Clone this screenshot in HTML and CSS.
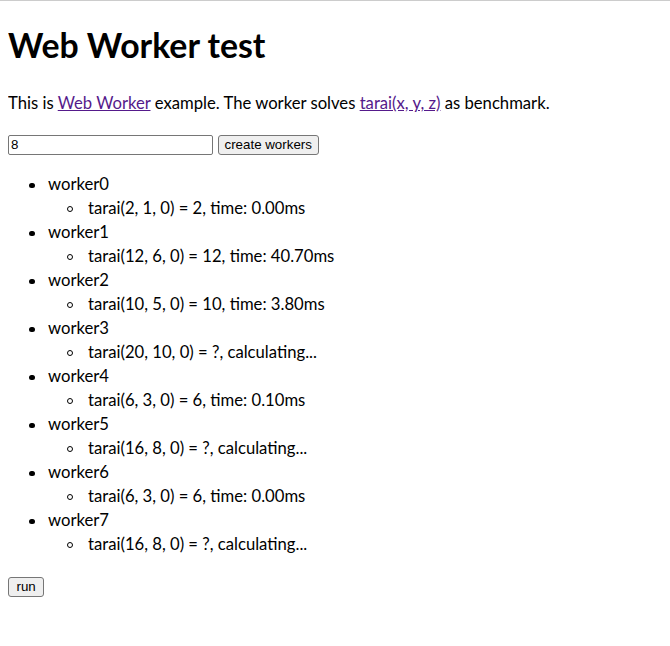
FILE: index.html
```html
<!DOCTYPE html>
<html>
<head>
<meta charset="utf-8">
<title>Web Worker test</title>
<link rel="stylesheet" href="styles.css">
</head>
<body>
<h1 class="title">Web Worker test</h1>
<p class="intro">This is <a class="link" href="#">Web Worker</a> example. The worker solves <a class="link" href="#">tarai(x, y, z)</a> as benchmark.</p>
<div class="controls">
  <input class="count" type="text" value="8">
  <button class="btn" type="button">create workers</button>
</div>
<ul class="workers">
  <li>worker0<ul class="results"><li>tarai(2, 1, 0) = 2, time: 0.00ms</li></ul></li>
  <li>worker1<ul class="results"><li>tarai(12, 6, 0) = 12, time: 40.70ms</li></ul></li>
  <li>worker2<ul class="results"><li>tarai(10, 5, 0) = 10, time: 3.80ms</li></ul></li>
  <li>worker3<ul class="results"><li>tarai(20, 10, 0) = ?, calculating...</li></ul></li>
  <li>worker4<ul class="results"><li>tarai(6, 3, 0) = 6, time: 0.10ms</li></ul></li>
  <li>worker5<ul class="results"><li>tarai(16, 8, 0) = ?, calculating...</li></ul></li>
  <li>worker6<ul class="results"><li>tarai(6, 3, 0) = 6, time: 0.00ms</li></ul></li>
  <li>worker7<ul class="results"><li>tarai(16, 8, 0) = ?, calculating...</li></ul></li>
</ul>
<div class="run-row">
  <button class="btn btn-run" type="button">run</button>
</div>
</body>
</html>
```
FILE: styles.css
```css
html {
  border-top: 1px solid #cccccc;
}
body {
  margin: 8px;
  font-family: Lato, "Open Sans", sans-serif;
  font-size: 16.67px;
  line-height: 24px;
  color: #000;
}
.title {
  font-size: 33.8px;
  line-height: 40px;
  font-weight: 700;
  margin: 16px 0 26px;
}
.intro {
  margin: 0;
}
.link {
  color: #551a8b;
}
.controls {
  display: flex;
  align-items: center;
  gap: 4.5px;
  margin-top: 19.5px;
}
.count {
  box-sizing: border-box;
  width: 205px;
  height: 20px;
  margin: 0;
  padding: 1px 2px;
  border: 1px solid #767676;
  border-radius: 2px;
  font-family: "Liberation Sans", Arial, sans-serif;
  font-size: 13.33px;
  color: #000;
  background: #fff;
}
.btn {
  box-sizing: border-box;
  height: 20px;
  margin: 0;
  padding: 1px 6px;
  border: 1px solid #767676;
  border-radius: 3px;
  background: #efefef;
  font-family: "Liberation Sans", Arial, sans-serif;
  font-size: 13.33px;
  line-height: 16px;
  color: #000;
}
.btn-run {
  padding: 1px 7.5px;
}
.workers {
  margin: 17px 0 0;
  padding-left: 40px;
  list-style: none;
}
.workers > li::before {
  content: "";
  display: inline-block;
  box-sizing: border-box;
  width: 5.5px;
  height: 5.5px;
  border-radius: 50%;
  background: #000;
  margin-left: -19px;
  margin-right: 13.5px;
  vertical-align: middle;
}
.results {
  margin: 0;
  padding-left: 40px;
  list-style: none;
}
.results > li::before {
  content: "";
  display: inline-block;
  box-sizing: border-box;
  width: 6px;
  height: 6px;
  border-radius: 50%;
  border: 1px solid #000;
  margin-left: -21px;
  margin-right: 15px;
  vertical-align: middle;
}
.run-row {
  display: flex;
  margin-top: 21px;
}
```
